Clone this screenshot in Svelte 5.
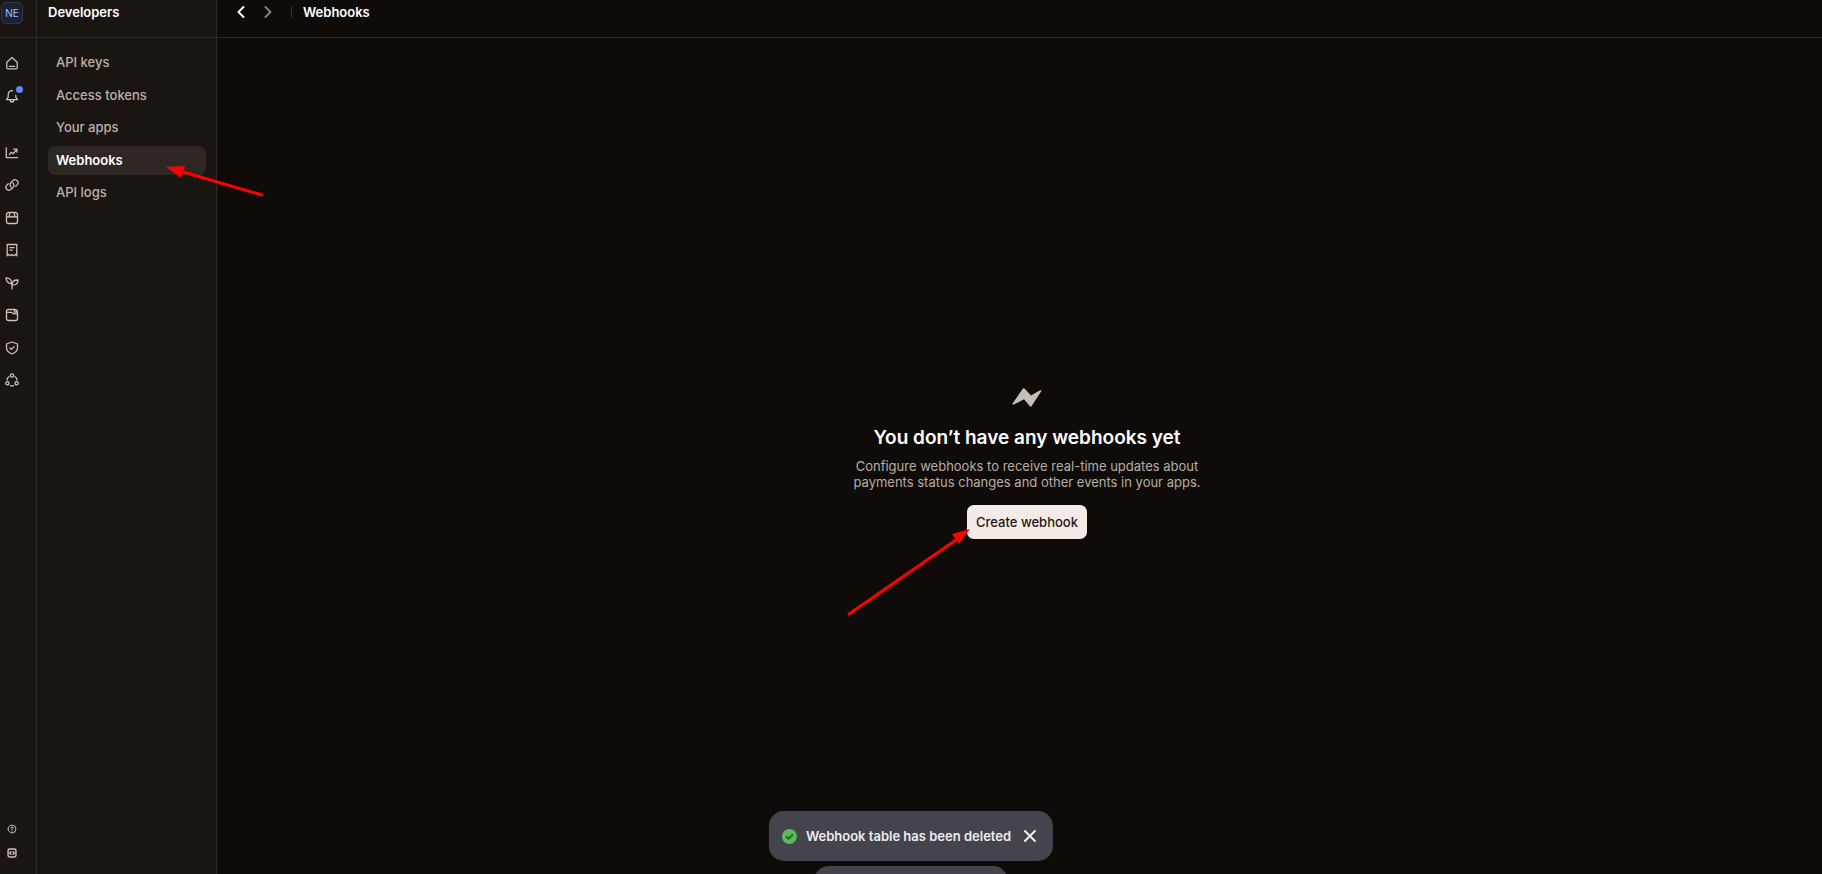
<script>
    const topIcons = [
        { name: "Home", paths: ["M1.800 6.200 7 1.500l5.200 4.700v5.600q0 1-1 1H2.800q-1 0-1-1z", "M4.500 10.300h5"] },
        { name: "Notifications", dot: true, paths: ["M7.500 1.700C4.800 1.500 3.200 3.500 3.200 5.700v2.500L1.500 10.600h11L10.800 8.200V6.500", "M5 11q.4 2 2 2t2-2"] }
    ];

    const mainIcons = [
        { name: "Transactions", paths: ["M1.300 2v9.600h11.400", "M4.300 8.600 6.300 6.200l1.800 1.500 3.500-3.900", "M8.700 3.200h3.200v3"] },
        { name: "Payment links", paths: ["M6.100 8.900a2.900 2.900 0 0 1-.2-4.200l1.900-1.900a2.800 2.800 0 0 1 4.500 3.800l-1.500 1.700", "M7.900 5.100a2.900 2.900 0 0 1 .2 4.200l-1.900 1.900a2.800 2.800 0 0 1-4.500-3.800l1.500-1.700"] },
        { name: "Storefront", paths: ["M3 1.500h8l1.500 1.500v7.500q0 2-2 2h-7q-2 0-2-2V3z", "M1.500 5.300q1.400 1.500 2.800 0 1.400 1.500 2.700 0 1.400 1.500 2.700 0 1.400 1.500 2.800 0", "M4.800 1.700 4.300 5M9.200 1.700l.5 3.300"] },
        { name: "Invoices", paths: ["M2.200 1.500h9.600v11.300L10.200 11.500 8.600 12.700 7 11.500l-1.600 1.200-1.600-1.200-1.600 1.300z", "M5 4.700h4M5 7.200h2.200"] },
        { name: "Growth", paths: ["M7 13V8.700", "M6.800 7.700C3.500 7.500 1.200 5.500 1 1.800 4.800 1.700 6.800 4 6.800 7.700z", "M7 8.800C7 5.600 9.200 3.800 13 4c0 3.500-2.300 5.300-6 4.800z"] },
        { name: "Balances", paths: ["M1.500 10.700V3.500q0-2 2-2h5.800q3.200 0 3.200 3v6.200q0 1.800-2 1.800h-7q-2 0-2-1.800z", "M1.700 4.300h4.500q1 0 1.500.8t1.500.8h3.200", "M9.500 1.700v2.500h2.800"] },
        { name: "Resolution", paths: ["M7 1l5.500 2v3.800c0 3.100-2.200 5-5.500 6.200-3.300-1.200-5.500-3.100-5.500-6.200V3z", "M4.900 7l1.500 1.400 2.700-2.800"] },
        { name: "Affiliates", paths: ["M5.400 2.400a1.600 1.600 0 1 0 3.200 0 1.600 1.600 0 1 0-3.200 0", "M.8 10.300a1.600 1.600 0 1 0 3.200 0 1.600 1.600 0 1 0-3.200 0", "M10 10.300a1.600 1.600 0 1 0 3.200 0 1.600 1.600 0 1 0-3.200 0", "M3.900 3.700Q2 5 2 7M10.100 3.700Q12 5 12 7M5.300 12.700q1.700.5 3.400 0"] }
    ];

    const bottomIcons = [
        { name: "Help", paths: ["M1.500 7a5.500 5.500 0 1 0 11 0 5.500 5.500 0 1 0-11 0", "M5.300 5.700q.2-1.600 1.700-1.600t1.700 1.400Q8.700 6.500 7 7.400v.700", "M7 9.700v.500"] },
        { name: "Developers", bold: true, paths: ["M3.500 1.500h7q2 0 2 2v7q0 2-2 2h-7q-2 0-2-2v-7q0-2 2-2z", "M5.500 5.200 3.900 7l1.600 1.800M8.500 5.200 10.100 7 8.500 8.800"] }
    ];

    const pages = ["API keys", "Access tokens", "Your apps", "Webhooks", "API logs"];

    let current = $state("Webhooks");
    let showToast = $state(true);
</script>

{#snippet icon(item)}
    <a class="rail-link" href="#{item.name}" aria-label={item.name}>
        <svg class:bold={item.bold} viewBox="0 0 14 14">
            {#each item.paths as d}
                <path {d} />
            {/each}
        </svg>
        {#if item.dot}<span class="dot"></span>{/if}
    </a>
{/snippet}

<div class="app">
    <aside class="rail">
        <div class="rail-head">
            <button class="avatar">NE</button>
        </div>
        <nav class="rail-group first">
            {#each topIcons as item}{@render icon(item)}{/each}
        </nav>
        <nav class="rail-group">
            {#each mainIcons as item}{@render icon(item)}{/each}
        </nav>
        <nav class="rail-group bottom">
            {#each bottomIcons as item}{@render icon(item)}{/each}
        </nav>
    </aside>

    <aside class="sidebar">
        <h2>Developers</h2>
        <nav>
            {#each pages as page}
                <a href="#{page}" class:active={current === page} onclick={() => (current = page)}>
                    {page}
                    {#if page === "Webhooks"}
                        <svg class="arrow arrow-nav" viewBox="0 0 100 32" aria-hidden="true">
                            <path d="M17 6 96 29" />
                            <polygon points="0,1 19,0 15,12" />
                        </svg>
                    {/if}
                </a>
            {/each}
        </nav>
    </aside>

    <div class="content">
        <header>
            <button class="step" aria-label="Back"><svg viewBox="0 0 8 12"><path d="M6.500 1 1.500 6l5 5" /></svg></button>
            <button class="step next" aria-label="Forward"><svg viewBox="0 0 8 12"><path d="m1.500 1 5 5-5 5" /></svg></button>
            <span class="divider"></span>
            <h1>Webhooks</h1>
        </header>

        <main>
            <svg class="bolt" viewBox="0 0 30 20">
                <path d="M11 .6q.8-.8 1.500 0L19 7.500 28 2.300q1.900-.6 1.300 1L19.500 18.200q-.8 1-1.600.1L12 11.200 1.900 16.500Q-.3 17.100.7 15.300z" />
            </svg>
            <h3>You don’t have any webhooks yet</h3>
            <p>Configure webhooks to receive real-time updates about payments status changes and other events in your apps.</p>
            <div class="action">
                <button class="create">Create webhook</button>
                <svg class="arrow arrow-create" viewBox="0 0 124 90" aria-hidden="true">
                    <path d="M2 87 109 13" />
                    <polygon points="123,2 105,7 112,17" />
                </svg>
            </div>
        </main>
    </div>
</div>

{#if showToast}
    <div class="toast" role="status">
        <svg class="check" viewBox="0 0 16 16">
            <circle cx="8" cy="8" r="8" />
            <path d="m4.800 8.300 2.200 2.200 4.300-4.300" />
        </svg>
        <span>Webhook table has been deleted</span>
        <button aria-label="Close" onclick={() => (showToast = false)}>
            <svg viewBox="0 0 12 12"><path d="m1 1 10 10M11 1 1 11" /></svg>
        </button>
    </div>
    <div class="toast-next"></div>
{/if}

<style>
    :global(body) {
        background: #0f0b08;
        color: #fff;
        font-family: Inter, "Liberation Sans", sans-serif;
        font-size: 13px;
        line-height: 16px;
        overflow: hidden;
    }

    h1, h2, h3, p {
        margin: 0;
    }

    button {
        padding: 0;
        border: 0;
        background: none;
        color: inherit;
        font: inherit;
        cursor: pointer;
    }

    a {
        color: inherit;
        text-decoration: none;
    }

    svg {
        display: block;
        fill: none;
        stroke: currentColor;
        stroke-linecap: round;
        stroke-linejoin: round;
    }

    .app {
        display: flex;
        height: 100vh;
    }

    .rail {
        display: flex;
        flex-direction: column;
        box-sizing: border-box;
        width: 37px;
        padding-bottom: 14px;
        background: #1a1511;
        border-right: 1px solid #302a27;
    }

    .rail-head {
        box-sizing: border-box;
        height: 38px;
        padding: 2px 1px;
        border-bottom: 1px solid #302a27;
    }

    .avatar {
        box-sizing: border-box;
        width: 22px;
        height: 22px;
        border: 1px solid #313748;
        border-radius: 5px;
        background: #1a2138;
        color: #a9c1fb;
        font-size: 10px;
        line-height: 18px;
    }

    .rail-group {
        display: flex;
        flex-direction: column;
        justify-content: space-between;
        height: 241px;
        margin-top: 43px;
        padding-left: 5px;
        color: #cdc1ba;
    }

    .rail-group.first {
        height: 47px;
        margin-top: 18px;
    }

    .rail-group.bottom {
        height: 38px;
        margin-top: auto;
    }

    .rail-link {
        position: relative;
        width: 14px;
        height: 14px;
    }

    .rail-link svg {
        stroke-width: 1.3;
    }

    .bottom .rail-link {
        box-sizing: border-box;
        padding: 2px;
    }

    .dot {
        position: absolute;
        top: -3px;
        right: -4px;
        width: 7px;
        height: 7px;
        border-radius: 50%;
        background: #6288f5;
    }

    .rail-link .bold {
        stroke-width: 2;
    }

    .sidebar {
        box-sizing: border-box;
        width: 180px;
        background: #1a1511;
        border-right: 1px solid #302a27;
    }

    .sidebar h2 {
        box-sizing: border-box;
        height: 38px;
        padding: 4px 11px;
        border-bottom: 1px solid #302a27;
        font-size: 13px;
        font-weight: 600;
    }

    .sidebar nav {
        display: flex;
        flex-direction: column;
        justify-content: space-between;
        height: 159px;
        padding: 10px 10px 0 11px;
    }

    .sidebar a {
        position: relative;
        padding: 0 8px;
        border-radius: 7px;
        color: #bdb1aa;
        font-weight: 500;
        line-height: 29px;
    }

    .sidebar a.active {
        background: #2e2724;
        color: #fff;
        font-weight: 600;
    }

    .content {
        display: flex;
        flex: 1;
        flex-direction: column;
    }

    header {
        display: flex;
        align-items: center;
        box-sizing: border-box;
        height: 38px;
        padding: 0 20px 13px;
        border-bottom: 1px solid #302a27;
    }

    .step svg {
        width: 8px;
        height: 12px;
        stroke-width: 2;
    }

    .next {
        margin-left: 19px;
        color: #8a7f79;
    }

    .divider {
        width: 1px;
        height: 12px;
        margin: 0 11px 0 19px;
        background: #35302c;
    }

    header h1 {
        font-size: 13px;
        font-weight: 600;
    }

    main {
        display: flex;
        flex: 1;
        flex-direction: column;
        align-items: center;
        justify-content: center;
        padding: 14px 0 0 15px;
        text-align: center;
    }

    .bolt {
        width: 30px;
        height: 20px;
        fill: #c8bdb5;
        stroke: none;
    }

    h3 {
        margin-top: 18px;
        font-size: 19px;
        font-weight: 600;
        line-height: 24px;
    }

    p {
        max-width: 350px;
        margin-top: 8px;
        color: #b9aea6;
    }

    .action {
        position: relative;
        margin-top: 15px;
    }

    .create {
        height: 34px;
        padding: 0 9px;
        border-radius: 7px;
        background: #f5ebe6;
        color: #1d1715;
        font-weight: 500;
    }

    .arrow {
        position: absolute;
        z-index: 1;
        stroke: #f00;
        stroke-width: 3;
        pointer-events: none;
    }

    .arrow polygon {
        fill: #f00;
        stroke: none;
    }

    .arrow-nav {
        top: 20px;
        left: 118px;
        width: 100px;
        height: 32px;
    }

    .arrow-create {
        top: 22px;
        right: 116px;
        width: 124px;
        height: 90px;
    }

    .toast,
    .toast-next {
        position: fixed;
        left: 50%;
        transform: translateX(-50%);
        border-radius: 15px;
        background: #45434b;
    }

    .toast {
        display: flex;
        align-items: center;
        box-sizing: border-box;
        bottom: 13px;
        height: 50px;
        padding: 0 17px 0 13px;
        color: #ededf0;
        font-weight: 600;
        white-space: nowrap;
    }

    .check {
        width: 15px;
        height: 15px;
        margin-right: 9px;
        stroke-width: 2;
    }

    .check circle {
        fill: #55bd55;
        stroke: none;
    }

    .check path {
        stroke: #3b5541;
    }

    .toast button {
        margin-left: 13px;
    }

    .toast button svg {
        width: 12px;
        height: 12px;
        stroke-width: 2;
    }

    .toast-next {
        bottom: -42px;
        width: 194px;
        height: 50px;
    }
</style>
